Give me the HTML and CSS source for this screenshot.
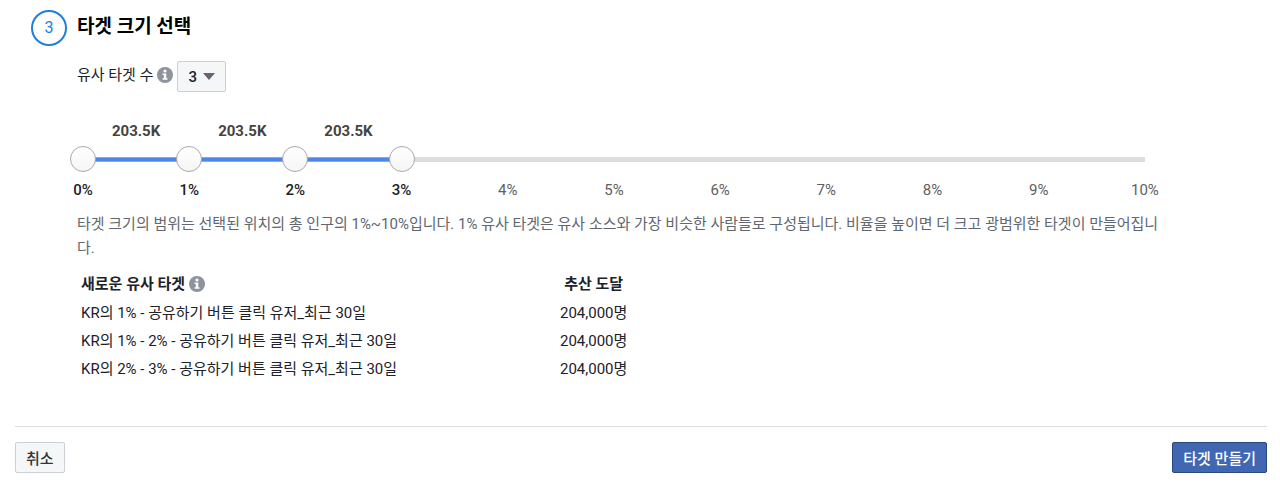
FILE: index.html
```html
<!DOCTYPE html>
<html lang="ko">
<head>
<meta charset="UTF-8" />
<meta name="viewport" content="width=device-width, initial-scale=1" />
<title>타겟 크기 선택</title>
<link rel="stylesheet" href="styles.css">
</head>
<body>
  <form class="audience-form">
    <section class="step">
      <span class="step-number">3</span>
      <div class="step-body">
        <h1>타겟 크기 선택</h1>

        <div class="count-row">
          <label for="count">유사 타겟 수</label>
          <svg class="info" viewBox="0 0 16 16" aria-hidden="true">
            <circle cx="8" cy="8" r="8" fill="#8d949e"/>
            <circle cx="8" cy="4" r="1.6" fill="#fff"/>
            <path d="M5.6 6.4h3.7v4.9h1.2v1.5H5.6v-1.5h1.2V7.9H5.6z" fill="#fff"/>
          </svg>
          <div class="select">
            <select id="count" name="count">
              <option>1</option>
              <option>2</option>
              <option selected>3</option>
            </select>
            <svg class="caret" viewBox="0 0 12 7" aria-hidden="true"><path d="M0 0h12L6 7z" fill="#606770"/></svg>
          </div>
        </div>

        <!-- Slider -->
        <div class="slider">
          <ol class="segments">
            <li>203.5K</li>
            <li>203.5K</li>
            <li>203.5K</li>
          </ol>
          <div class="track">
            <div class="rail"><div class="fill"></div></div>
            <input type="range" min="0" max="10" value="0" aria-label="시작" />
            <input type="range" min="0" max="10" value="1" aria-label="타겟 1" />
            <input type="range" min="0" max="10" value="2" aria-label="타겟 2" />
            <input type="range" min="0" max="10" value="3" aria-label="타겟 3" />
          </div>
          <ol class="ticks">
            <li class="on">0%</li>
            <li class="on">1%</li>
            <li class="on">2%</li>
            <li class="on">3%</li>
            <li>4%</li>
            <li>5%</li>
            <li>6%</li>
            <li>7%</li>
            <li>8%</li>
            <li>9%</li>
            <li>10%</li>
          </ol>
        </div>

        <p class="help">타겟 크기의 범위는 선택된 위치의 총 인구의 1%~10%입니다. 1% 유사 타겟은 유사 소스와 가장 비슷한 사람들로 구성됩니다. 비율을 높이면 더 크고 광범위한 타겟이 만들어집니다.</p>

        <table class="audiences">
          <thead>
            <tr>
              <th scope="col">
                <span class="heading">새로운 유사 타겟
                  <svg class="info" viewBox="0 0 16 16" aria-hidden="true">
                    <circle cx="8" cy="8" r="8" fill="#8d949e"/>
                    <circle cx="8" cy="4" r="1.6" fill="#fff"/>
                    <path d="M5.6 6.4h3.7v4.9h1.2v1.5H5.6v-1.5h1.2V7.9H5.6z" fill="#fff"/>
                  </svg>
                </span>
              </th>
              <th scope="col" class="reach">추산 도달</th>
            </tr>
          </thead>
          <tbody>
            <tr><td>KR의 1% - 공유하기 버튼 클릭 유저_최근 30일</td><td class="reach">204,000명</td></tr>
            <tr><td>KR의 1% - 2% - 공유하기 버튼 클릭 유저_최근 30일</td><td class="reach">204,000명</td></tr>
            <tr><td>KR의 2% - 3% - 공유하기 버튼 클릭 유저_최근 30일</td><td class="reach">204,000명</td></tr>
          </tbody>
        </table>
      </div>
    </section>

    <footer class="actions">
      <button type="button" class="btn">취소</button>
      <button type="submit" class="btn btn-primary">타겟 만들기</button>
    </footer>
  </form>
</body>
</html>
```
FILE: styles.css
```css
* {
  box-sizing: border-box;
}
body {
  margin: 0;
  background: #fff;
  color: #1d2129;
  font-family: Roboto, "Noto Sans CJK KR", sans-serif;
  font-size: 15px;
  line-height: 24px;
}
h1, p, ol {
  margin: 0;
  padding: 0;
}
ol {
  list-style: none;
}
.audience-form {
  padding: 10px 13px 13px 15px;
}
.step {
  display: flex;
  align-items: flex-start;
  gap: 10px;
  padding: 0 0 43px 16px;
}
.step-number {
  flex: none;
  width: 36px;
  height: 36px;
  border: 2px solid #1f7fdb;
  border-radius: 50%;
  color: #1f7fdb;
  font-size: 16px;
  line-height: 32px;
  text-align: center;
}
.step-body {
  flex: 1;
  min-width: 0;
}
h1 {
  font-size: 19px;
  line-height: 34px;
  font-weight: 700;
  color: #000;
}
.info {
  width: 16px;
  height: 16px;
  flex: none;
}
.count-row {
  display: flex;
  align-items: center;
  gap: 4px;
  margin-top: 17px;
}
.count-row > label,
.count-row > .info {
  margin-bottom: 4px;
}
.select {
  display: grid;
  align-items: center;
}
.select select {
  grid-area: 1 / 1;
  appearance: none;
  width: 49px;
  height: 31px;
  padding: 0 10px;
  border: 1px solid #ccd0d5;
  border-radius: 2px;
  background: #f5f6f7;
  color: #1d2129;
  font: 500 15px Roboto, sans-serif;
}
.caret {
  grid-area: 1 / 1;
  justify-self: end;
  width: 12px;
  height: 7px;
  margin-right: 11px;
  pointer-events: none;
}

.slider {
  margin: 27px 109px 0 -7px;
}
.segments {
  display: flex;
  margin: 0 13px;
  font-weight: 700;
  color: #444;
}
.segments li {
  width: 10%;
  text-align: center;
}
.track {
  display: grid;
  align-items: center;
  margin-top: 3px;
}
.rail,
.track input {
  grid-area: 1 / 1;
}
.rail {
  height: 5px;
  margin: 0 13px;
  background: #dadee0;
}
.fill {
  width: 30%;
  height: 5px;
  background: #4f86ee;
  border: solid #7eaaf7;
  border-width: 1px 0;
}
.track input {
  appearance: none;
  width: 100%;
  height: 26px;
  margin: 0;
  background: none;
  pointer-events: none;
}
.track input::-webkit-slider-thumb {
  appearance: none;
  width: 26px;
  height: 26px;
  border: 1px solid #aaa;
  border-radius: 50%;
  background: linear-gradient(#fff, #f5f5f5);
  pointer-events: auto;
}
.ticks {
  display: flex;
  justify-content: space-between;
  margin-top: 6px;
  color: #606060;
}
.ticks li {
  display: flex;
  justify-content: center;
  width: 26px;
}
.ticks .on {
  font-weight: 500;
  color: #222;
}

.help {
  margin: 10px 104px 0 0;
  color: #606770;
}
.audiences {
  margin-top: 10px;
  border-collapse: collapse;
}
.audiences th,
.audiences td {
  padding: 2px 4px;
  text-align: left;
}
.audiences th {
  padding-bottom: 3px;
  font-weight: 700;
}
.audiences th:first-child {
  width: 479px;
}
.audiences .reach {
  text-align: center;
}
.heading {
  display: flex;
  align-items: center;
  gap: 4px;
}

.actions {
  display: flex;
  justify-content: space-between;
  padding-top: 15px;
  border-top: 1px solid #dadde1;
}
.btn {
  height: 31px;
  padding: 0 10px;
  border: 1px solid #ccd0d5;
  border-radius: 2px;
  background: #f5f6f7;
  color: #333;
  font: 500 15px Roboto, "Noto Sans CJK KR", sans-serif;
  cursor: pointer;
}
.btn-primary {
  border-color: #29487d;
  background: #4267b2;
  color: #fff;
}
```
